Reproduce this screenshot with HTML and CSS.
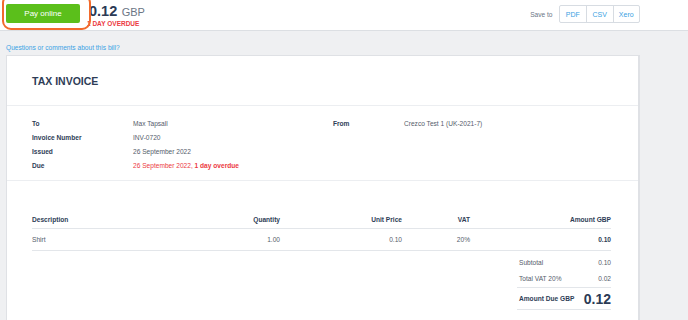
FILE: index.html
```html
<!DOCTYPE html>
<html>
<head>
<meta charset="utf-8">
<link rel="stylesheet" href="styles.css">
</head>
<body>
<header class="topbar">
  <div class="left">
    <button class="pay">Pay online</button>
    <div class="due-summary">
      <div class="total"><span class="num">0.12</span> <span class="cur">GBP</span></div>
      <div class="overdue">1 DAY OVERDUE</div>
    </div>
    <div class="ring"></div>
  </div>
  <div class="right">
    <span class="saveto">Save to</span>
    <div class="btngroup">
      <a class="sbtn">PDF</a><a class="sbtn">CSV</a><a class="sbtn">Xero</a>
    </div>
  </div>
</header>
<main class="page">
  <a class="question">Questions or comments about this bill?</a>
  <section class="card">
    <div class="sec title-sec"><h1>TAX INVOICE</h1></div>
    <div class="sec details">
      <div class="dgrid to">
        <div class="lab">To</div><div class="val">Max Tapsall</div>
        <div class="lab">Invoice Number</div><div class="val">INV-0720</div>
        <div class="lab">Issued</div><div class="val">26 September 2022</div>
        <div class="lab">Due</div><div class="val red">26 September 2022, <b>1 day overdue</b></div>
      </div>
      <div class="dgrid from">
        <div class="lab">From</div><div class="val">Crezco Test 1 (UK-2021-7)</div>
      </div>
    </div>
    <div class="sec items">
      <div class="trow thead">
        <div>Description</div><div class="r">Quantity</div><div class="r">Unit Price</div><div class="r">VAT</div><div class="r">Amount GBP</div>
      </div>
      <div class="trow tbody">
        <div>Shirt</div><div class="r">1.00</div><div class="r">0.10</div><div class="r">20%</div><div class="r strong">0.10</div>
      </div>
      <div class="totals">
        <div class="tline"><span>Subtotal</span><span>0.10</span></div>
        <div class="tline"><span>Total VAT 20%</span><span>0.02</span></div>
        <div class="tline grand"><span>Amount Due GBP</span><span class="big">0.12</span></div>
      </div>
    </div>
  </section>
</main>
</body>
</html>
```
FILE: styles.css
```css
* { box-sizing: border-box; }
html, body { margin: 0; padding: 0; }
body {
  font-family: "Liberation Sans", Arial, sans-serif;
  background: #eff0f2;
  width: 688px;
  height: 320px;
  overflow: hidden;
  color: #2e3d56;
}
.topbar {
  height: 31px;
  background: #fff;
  border-bottom: 1px solid #dcdfe3;
  display: flex;
  justify-content: space-between;
  align-items: flex-start;
  padding: 0 48px 0 6px;
}
.left { display: flex; align-items: flex-start; position: relative; }
.pay {
  margin-top: 4px;
  width: 74px;
  height: 19px;
  border: none;
  border-radius: 2px;
  background: #5bbf1b;
  color: #fff;
  font-family: inherit;
  font-size: 8px;
  padding: 0;
}
.due-summary { margin-left: 9px; margin-top: 3px; }
.total { line-height: 15px; white-space: nowrap; }
.total .num { font-size: 14.5px; font-weight: bold; color: #2b3a55; }
.total .cur { font-size: 11px; color: #6b7585; }
.overdue {
  font-size: 6.5px;
  font-weight: bold;
  color: #ec3a3f;
  margin-top: 0px;
  margin-left: -2px;
}
.ring {
  position: absolute;
  left: -4px;
  top: -6px;
  width: 89px;
  height: 36px;
  border: 2px solid #f26a2c;
  border-radius: 9px;
}
.right { display: flex; align-items: center; margin-top: 5px; }
.saveto { font-size: 6.6px; color: #6b7585; margin-right: 6px; }
.btngroup { display: flex; border: 1px solid #d7dce2; border-radius: 2px; height: 18px; }
.sbtn {
  font-size: 7px;
  color: #3a9fe2;
  width: 26.5px;
  display: flex;
  align-items: center;
  justify-content: center;
  border-left: 1px solid #d7dce2;
}
.sbtn:first-child { border-left: none; }
.page { padding: 12px 48px 0 6px; }
.question {
  display: block;
  font-size: 6.6px;
  color: #3ba2e4;
  line-height: 9px;
}
.card {
  margin-top: 3px;
  background: #fff;
  border: 1px solid #dfe1e5;
  border-right-width: 2px;
  height: 300px;
}
.sec { border-bottom: 1px solid #eceef1; padding: 0 27px 0 25px; }
.title-sec { height: 50px; display: flex; align-items: center; }
h1 { margin: 0; font-size: 10.5px; font-weight: bold; color: #2e3d56; padding-top: 1px; }
.details { display: flex; height: 75px; padding-top: 11px; }
.dgrid {
  display: grid;
  grid-auto-rows: 13.8px;
  align-items: center;
  font-size: 6.6px;
  flex: none;
}
.dgrid.to { grid-template-columns: 101px auto; width: 301px; }
.dgrid.from { grid-template-columns: 71px auto; }
.lab { font-weight: bold; color: #2e3d56; }
.val { color: #555d6b; }
.val.red { color: #ec3a3f; }
.val.red b { font-weight: bold; }
.items { border-bottom: none; padding-top: 31px; }
.trow {
  display: grid;
  grid-template-columns: 168px 80px 122px 68px 1fr;
  font-size: 6.6px;
  align-items: center;
  border-bottom: 1px solid #e3e6ea;
}
.trow .r { text-align: right; }
.thead { height: 17px; font-weight: bold; color: #2e3d56; padding-bottom: 1px; }
.tbody { height: 22px; color: #555d6b; }
.strong { font-weight: bold; color: #2e3d56; }
.totals { margin-left: auto; width: 94px; font-size: 6.6px; color: #555d6b; }
.tline { display: flex; justify-content: space-between; align-items: center; height: 16px; padding-left: 2px; }
.tline:first-child { height: 19px; padding-top: 3px; }
.tline.grand {
  height: 23px;
  border-top: 1px solid #e3e6ea;
  border-bottom: 1px solid #e3e6ea;
  font-weight: bold;
  color: #2e3d56;
  margin-top: 1px;
}
.big { font-size: 14px; font-weight: bold; color: #2b3a55; }
```
